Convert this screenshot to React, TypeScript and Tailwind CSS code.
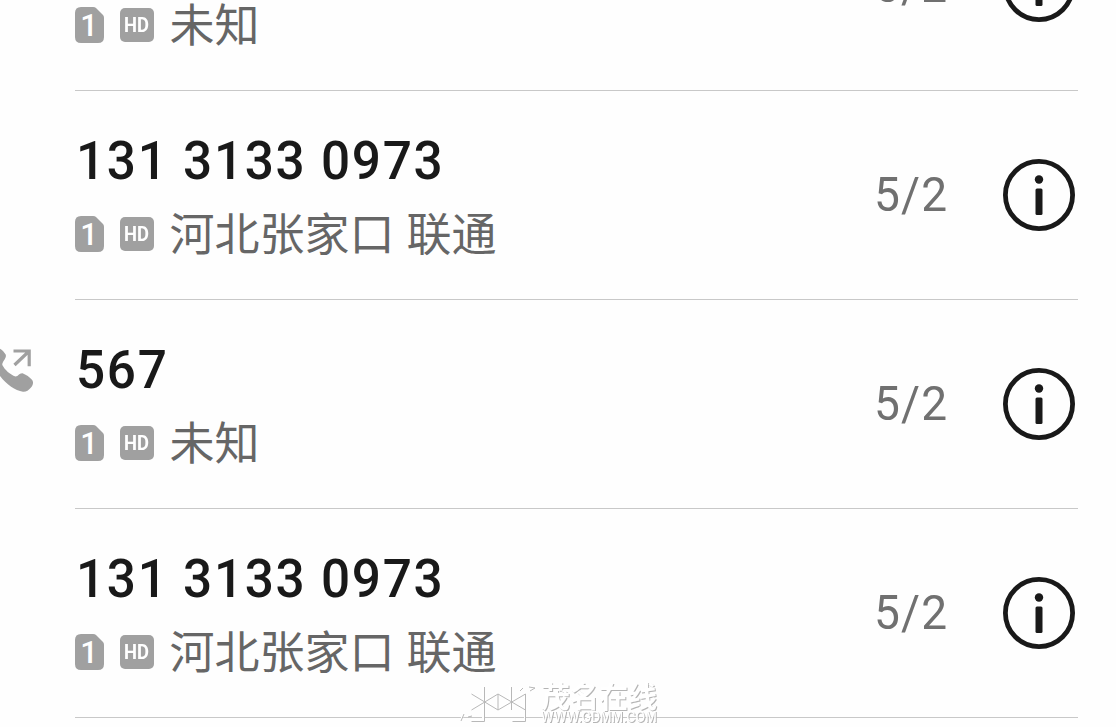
import React from "react";

type Call = { number: string; place: string; date: string; outgoing?: boolean };

const calls: Call[] = [
  { number: "567", place: "未知", date: "5/2" },
  { number: "131 3133 0973", place: "河北张家口 联通", date: "5/2" },
  { number: "567", place: "未知", date: "5/2", outgoing: true },
  { number: "131 3133 0973", place: "河北张家口 联通", date: "5/2" },
];

function SimBadge() {
  return (
    <span className="flex h-[36px] w-[29px] shrink-0 items-center justify-center bg-[#a0a0a0] pt-[1px] pr-[1px] font-[Roboto] text-[31px] leading-none font-medium text-white [clip-path:path('M6_0H18Q20_0_21_1L28_8Q29_9_29_11V30Q29_36_23_36H6Q0_36_0_30V6Q0_0_6_0Z')]">
      1
    </span>
  );
}

function HdBadge() {
  return (
    <span className="ml-4 flex h-[34px] w-[34px] shrink-0 items-center justify-center rounded-[5px] bg-[#a0a0a0] pb-[1px] font-[Roboto] text-[20px] leading-none font-bold text-white">
      <span className="scale-x-[0.92]">HD</span>
    </span>
  );
}

function InfoIcon() {
  return (
    <svg className="h-[72px] w-[72px] shrink-0" viewBox="0 0 72 72" fill="none">
      <circle cx="36" cy="36" r="33.600" stroke="#191919" strokeWidth="4.800" />
      <circle cx="36" cy="20.500" r="4.200" fill="#191919" />
      <rect x="32.500" y="29.500" width="7" height="26.500" rx="1.500" fill="#191919" />
    </svg>
  );
}

function OutgoingIcon() {
  return (
    <svg className="h-[46px] w-[46px] shrink-0" viewBox="0 0 46 46" fill="none">
      <path
        d="M5 3C8 0 12 1 15 4L17.700 7.500C19 11.500 14 14.500 14.300 18C17 23 22 27.500 27.500 29.500C30.500 29.500 31 26 34.500 26.300C38 27.500 41 30 43.700 32.500C46 35 45 38 43 40.500C40.500 43.500 38 45 35 44.700C27 43.500 19 38 12 29C5 20 1 10 5 3Z"
        fill="#a0a0a0"
      />
      <path d="M25.500 4H41.200V19.300M40.700 4.500L26.500 18" stroke="#a0a0a0" strokeWidth="3.200" />
    </svg>
  );
}

function CallRow({ call }: { call: Call }) {
  return (
    <li className="flex h-[209px] shrink-0">
      <div className="flex w-[75px] shrink-0 justify-end pt-[47px] pr-[41px]">
        {call.outgoing && <OutgoingIcon />}
      </div>
      <div className="mr-[38px] flex min-w-0 flex-1 items-center border-b border-[#c8c8c8]">
        <div className="h-full min-w-0 flex-1 pt-[38px]">
          <div className="h-[64px] origin-left scale-x-[0.95] pl-[1px] font-[Roboto] text-[54px] leading-[64px] font-medium tracking-[1.800px] whitespace-pre text-[#191919]">
            {call.number}
          </div>
          <div className="mt-[9px] flex h-[64px] items-center">
            <SimBadge />
            <HdBadge />
            <span className="relative -top-[2px] ml-[15.500px] font-['Noto_Sans_CJK_SC',sans-serif] text-[45px] leading-[64px] whitespace-pre text-[#666666] [word-spacing:2px]">
              {call.place}
            </span>
          </div>
        </div>
        <span className="mr-[55px] origin-right scale-x-[0.95] font-[Roboto] text-[48.500px] tracking-[1.300px] text-[#707070]">
          {call.date}
        </span>
        <div className="mr-[3px]">
          <InfoIcon />
        </div>
      </div>
    </li>
  );
}

function Watermark() {
  return (
    <div className="absolute top-[682px] left-[460px] flex">
      <svg className="h-[42px] w-[78px]" viewBox="0 0 78 42" fill="none">
        <path
          d="M11 11L37 27M11 27L37 11V27M23 4V38H11M37 27L65 11V38H51M37 11L65 27M50.500 4V27M59 8L62 5M68 4L75 5L69 8M1 38L4 31M7 34L11 33"
          stroke="white"
          strokeWidth="2"
        />
        <path
          d="M11.500 12L38 28M11.500 28L38 12V28M24.500 5V39.500H11.500M38 28L65.500 12V39.500H52.500M38 12L65.500 28M51.500 5V28M60 9L63 6M69 5L75 6L70 9M1 39L4 32M8 35L12 34"
          stroke="#b8b8b8"
          strokeWidth="1"
        />
      </svg>
      <div className="ml-[3px] flex flex-col text-white [filter:drop-shadow(1px_1px_0_#b4b4b4)]">
        <span className="h-[28px] font-['Noto_Sans_CJK_SC',sans-serif] text-[29px] leading-[26px] font-bold">
          茂名在线
        </span>
        <span className="h-[12px] w-[118px] origin-left scale-x-[0.9] font-[Inter] text-[14px] leading-[13px] font-medium">
          WWW.GDMM.COM
        </span>
      </div>
    </div>
  );
}

export default function App() {
  return (
    <main className="relative h-[727px] w-[1116px] overflow-hidden bg-[#fefefe]">
      <ul className="-mt-[118px] flex flex-col">
        {calls.map((call, i) => (
          <CallRow key={i} call={call} />
        ))}
      </ul>
      <Watermark />
    </main>
  );
}
